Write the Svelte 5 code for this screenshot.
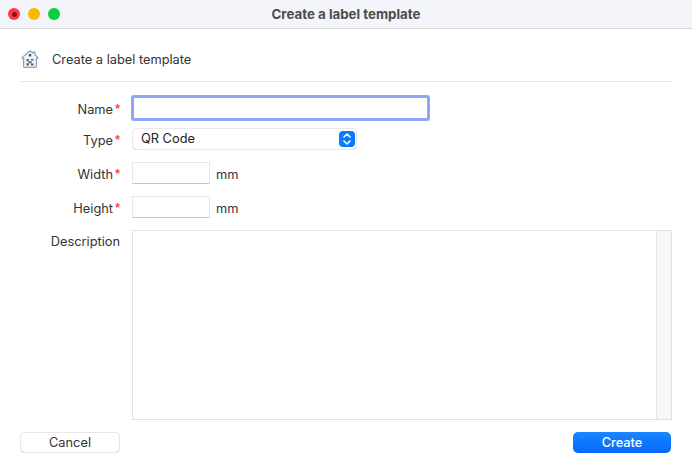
<script>
  const sizeFields = ["Width", "Height"];
</script>

<div class="window">
  <div class="titlebar">
    <div class="lights">
      <span class="light red"><i></i></span>
      <span class="light yellow"></span>
      <span class="light green"></span>
    </div>
    <span class="title">Create a label template</span>
  </div>

  <div class="content">
    <div class="heading">
      <svg width="18" height="18" viewBox="0 0 18 18" fill="none">
        <path d="M9 .8 L12 3.2 V2 H14 V4.8 L17 7.6 Q17.3 8.4 16 8.4 H15.4 V16.6 Q15.4 17.4 14.6 17.4 H3.4 Q2.6 17.4 2.6 16.6 V8.4 H2 Q.7 8.4 1 7.6 Z" fill="#eef3f9" stroke="#86a3c6" stroke-width="1.2" stroke-linejoin="round" />
        <rect x="7.8" y="4" width="2.4" height="2.4" fill="#4a5563" />
        <path d="M5.5 9h2.4v2.2H5.5zM9.9 9h2.6v1.6H9.9zM7.6 11.2h3v2h-3zM5.5 13.2h2.4v2.2H5.5zM10 13.6h2.5v1.8H10z" fill="#5a6470" />
      </svg>
      <span>Create a label template</span>
    </div>

    <form class="form">
      <div class="row name-row">
        <label class="label" for="name">Name<b>*</b></label>
        <input id="name" class="name-input" type="text" />
      </div>

      <div class="row type-row">
        <span class="label">Type<b>*</b></span>
        <div class="select">
          <span>QR Code</span>
          <span class="stepper">
            <svg width="10" height="14" viewBox="0 0 10 14" fill="none" stroke="#fff" stroke-width="1.6" stroke-linecap="round" stroke-linejoin="round">
              <path d="M2 5 L5 2 L8 5" />
              <path d="M2 9 L5 12 L8 9" />
            </svg>
          </span>
        </div>
      </div>

      {#each sizeFields as field}
        <div class="row size-row">
          <span class="label">{field}<b>*</b></span>
          <input class="size-input" type="text" />
          <span class="unit">mm</span>
        </div>
      {/each}

      <div class="row desc-row">
        <span class="label desc-label">Description</span>
        <div class="textarea">
          <div class="scrollbar"></div>
        </div>
      </div>
    </form>

    <div class="actions">
      <button class="btn cancel" type="button">Cancel</button>
      <button class="btn create" type="button">Create</button>
    </div>
  </div>
</div>

<style>
  :global(body) {
    margin: 0;
    background: #fff;
  }
  .window {
    width: 692px;
    height: 472px;
    overflow: hidden;
    font-family: Inter, "Liberation Sans", sans-serif;
    font-size: 12.8px;
    color: #333;
    background: #fff;
  }
  .titlebar {
    height: 28px;
    position: relative;
    display: flex;
    align-items: center;
    justify-content: center;
    background: #f3f5fb;
    border-bottom: 1px solid #d9d9d9;
  }
  .lights {
    position: absolute;
    left: 8px;
    top: 8px;
    display: flex;
    gap: 8px;
  }
  .light {
    width: 12px;
    height: 12px;
    border-radius: 50%;
    display: flex;
    align-items: center;
    justify-content: center;
  }
  .light i {
    width: 5px;
    height: 5px;
    border-radius: 50%;
    background: #8c0f14;
  }
  .red { background: #fc3a40; }
  .yellow { background: #fdb700; }
  .green { background: #0ccc42; }
  .title {
    font-size: 13.3px;
    font-weight: 700;
    color: #4c4c4c;
  }
  .content {
    padding: 0 20px;
  }
  .heading {
    box-sizing: border-box;
    height: 53px;
    padding: 8px 0 0 1px;
    display: flex;
    align-items: center;
    gap: 13px;
    border-bottom: 1px solid #e2e2e2;
  }
  .form {
    padding-top: 13px;
  }
  .row {
    display: flex;
    align-items: center;
    gap: 12px;
  }
  .type-row {
    margin-top: 7px;
  }
  .size-row {
    margin-top: 12px;
  }
  .desc-row {
    margin-top: 12px;
    align-items: flex-start;
  }
  .label {
    box-sizing: border-box;
    flex: none;
    width: 100px;
    padding: 2px 7px 0 0;
    text-align: right;
    position: relative;
  }
  .label b {
    position: absolute;
    right: 0;
    top: 2px;
    color: #f44;
    font-family: "Liberation Sans", sans-serif;
    font-size: 12px;
    font-weight: 700;
  }
  .desc-label {
    padding: 4px 0 0;
  }
  .name-input {
    box-sizing: border-box;
    width: 299px;
    height: 26px;
    margin: 0 0 0 -1px;
    padding: 0 4px;
    border: 3px solid #8ea6f7;
    border-radius: 3px;
    outline: none;
    background: #fff;
  }
  .select {
    box-sizing: border-box;
    width: 225px;
    height: 22px;
    padding: 0 2px 1px 9px;
    display: flex;
    align-items: center;
    justify-content: space-between;
    border-radius: 5px;
    background: #fff;
    box-shadow: inset 0 0 0 1px #eaeaea, inset 0 -1px 0 #b4b4b4;
    color: #222;
  }
  .stepper {
    width: 16px;
    height: 16px;
    border-radius: 4px;
    background: #0a7aff;
    display: flex;
    align-items: center;
    justify-content: center;
  }
  .size-input {
    box-sizing: border-box;
    width: 78px;
    height: 22px;
    margin: 0;
    padding: 0 4px;
    border: 1px solid #e6e6e6;
    border-bottom-color: #c6c6c6;
    border-radius: 0;
    outline: none;
    background: #fff;
  }
  .unit {
    margin-left: -6px;
    padding-top: 2px;
  }
  .textarea {
    box-sizing: border-box;
    flex: 1;
    height: 190px;
    border: 1px solid #e2e2e2;
    display: flex;
    justify-content: flex-end;
    background: #fff;
  }
  .scrollbar {
    width: 14px;
    background: #f8f8f8;
    border-left: 1px solid #e6e6e6;
  }
  .actions {
    display: flex;
    justify-content: space-between;
    padding: 12px 1px 0 0;
  }
  .btn {
    box-sizing: border-box;
    height: 21px;
    padding: 0;
    border: none;
    border-radius: 5px;
    font: inherit;
  }
  .cancel {
    width: 100px;
    background: #fff;
    color: #333;
    box-shadow: inset 0 0 0 1px #e6e6e6, inset 0 -1px 0 #bcbcbc;
  }
  .create {
    width: 98px;
    background: linear-gradient(#1a86ff, #0568fb);
    color: #fff;
    font-weight: 500;
  }
</style>
